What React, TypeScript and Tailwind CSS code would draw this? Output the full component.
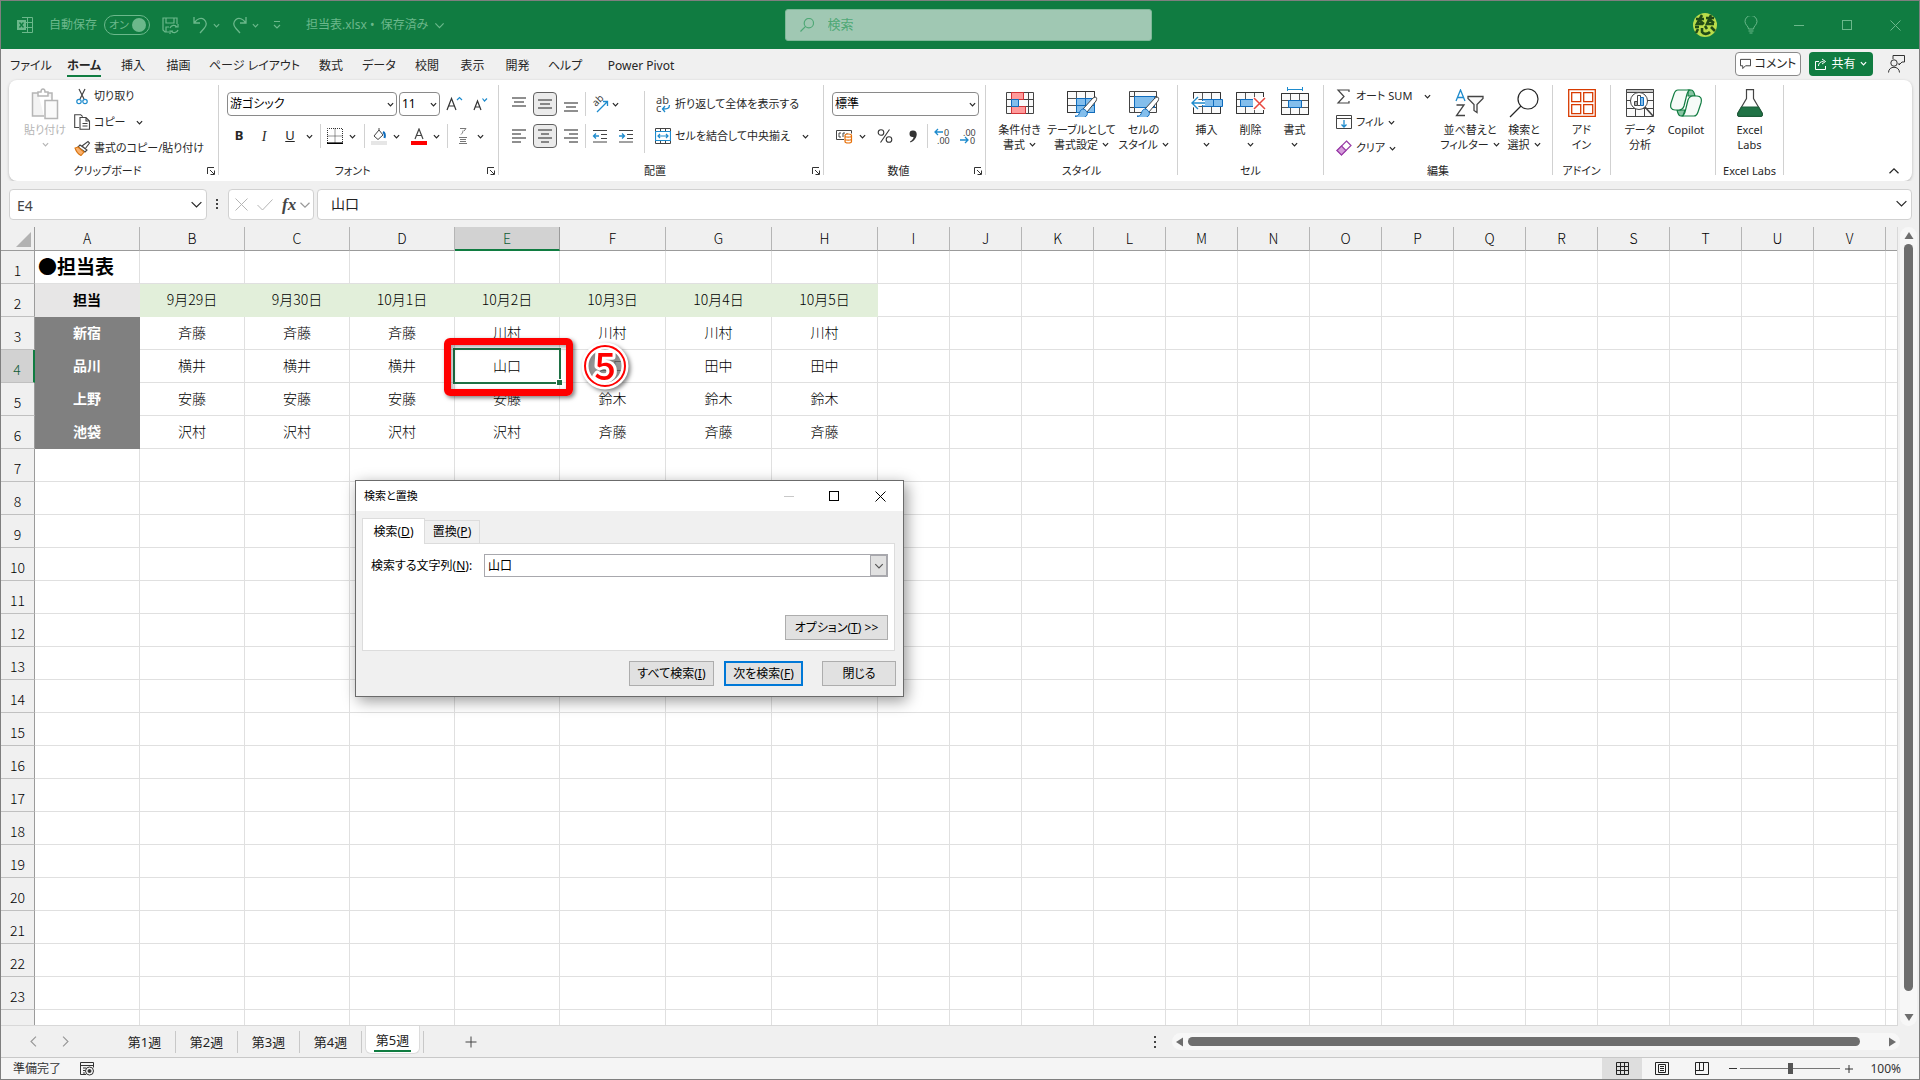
import React from 'react';
import clsx from 'clsx';

const RIBBON_TABS = [
  { label: 'ファイル', width: 'w-[54px]' },
  { label: 'ホーム', width: 'w-[52px]', active: true },
  { label: '挿入', width: 'w-[46px]' },
  { label: '描画', width: 'w-[45px]' },
  { label: 'ページ レイアウト', width: 'w-[107px]' },
  { label: '数式', width: 'w-[46px]' },
  { label: 'データ', width: 'w-[50px]' },
  { label: '校閲', width: 'w-[46px]' },
  { label: '表示', width: 'w-[45px]' },
  { label: '開発', width: 'w-[45px]' },
  { label: 'ヘルプ', width: 'w-[50px]' },
  { label: 'Power Pivot', width: 'w-[102px]' },
];

const COLUMNS = 'ABCDEFGHIJKLMNOPQRSTUVW'.split('');
const ROWS = Array.from({ length: 24 }, (_, i) => i + 1);

const DATA: Record<number, string[]> = {
  1: ['●担当表'],
  2: ['担当', '9月29日', '9月30日', '10月1日', '10月2日', '10月3日', '10月4日', '10月5日'],
  3: ['新宿', '斉藤', '斉藤', '斉藤', '川村', '川村', '川村', '川村'],
  4: ['品川', '横井', '横井', '横井', '山口', '山口', '田中', '田中'],
  5: ['上野', '安藤', '安藤', '安藤', '安藤', '鈴木', '鈴木', '鈴木'],
  6: ['池袋', '沢村', '沢村', '沢村', '沢村', '斉藤', '斉藤', '斉藤'],
};

const SHEETS = ['第1週', '第2週', '第3週', '第4週'];

function columnWidth(index: number) {
  if (index < 5) return 'w-[105px]';
  if (index < 8) return 'w-[106px]';
  return 'w-[72px]';
}

function cellStyle(row: number, col: number) {
  if (row === 1 && col === 0) {
    return 'border-[#e0e0e0] text-left pl-[3px] text-[19px] font-bold whitespace-nowrap';
  }
  if (row === 2 && col === 0) return 'border-[#e7e6e6] bg-[#e7e6e6] font-bold';
  if (row === 2 && col < 8) return 'border-[#e2efda] bg-[#e2efda]';
  if (row > 2 && row < 7 && col === 0) {
    return 'border-[#808080] bg-[#808080] text-white font-bold';
  }
  return 'border-[#e0e0e0]';
}

/* ---------- small pieces ---------- */

function Chevron({ size = 7, className }: { size?: number; className?: string }) {
  return (
    <svg width={size} height={size} viewBox="0 0 8 8" className={clsx('shrink-0', className)} fill="none" stroke="currentColor" strokeWidth="1.2">
      <path d="M1 2.5 4 5.5 7 2.5" vectorEffect="non-scaling-stroke" />
    </svg>
  );
}

function Divider() {
  return <div className="mt-[5px] h-[90px] w-px shrink-0 bg-[#d1d1d1]" />;
}

function Sep({ className }: { className: string }) {
  return (
    <div className={clsx('flex h-6 shrink-0 justify-center', className)}>
      <div className="h-full w-px bg-[#d1d1d1]" />
    </div>
  );
}

function Launcher() {
  return (
    <button type="button" className="flex w-3 items-center" aria-label="詳細設定">
      <svg width="10" height="10" viewBox="0 0 10 10" fill="none" stroke="#333" strokeWidth="1">
        <path d="M1.5 8V1.5H8M4 4l4 4M8.5 4.5v4h-4" />
      </svg>
    </button>
  );
}

interface GroupProps {
  width: string;
  caption?: string;
  launcher?: boolean;
  children: React.ReactNode;
}

function Group({ width, caption, launcher, children }: GroupProps) {
  return (
    <>
      <section className={clsx('flex shrink-0 flex-col', width)}>
        <div className="flex h-[81px]">{children}</div>
        <div className="flex h-5 items-stretch">
          <span className="flex-1 text-center leading-[19px] whitespace-nowrap">{caption}</span>
          {launcher && <Launcher />}
        </div>
      </section>
      <Divider />
    </>
  );
}

interface BigButtonProps {
  width: string;
  icon: React.ReactNode;
  lines: string[];
  arrow?: 'inline' | 'below';
}

function BigButton({ width, icon, lines, arrow }: BigButtonProps) {
  return (
    <button type="button" className={clsx('flex shrink-0 flex-col items-center pt-[9px] leading-[15px] whitespace-nowrap', width)}>
      <span className="mb-[5px] flex h-7 items-center">{icon}</span>
      {lines.map((line, i) => (
        <span key={line} className="flex items-center gap-1">
          {line}
          {arrow === 'inline' && i === lines.length - 1 && <Chevron />}
        </span>
      ))}
      {arrow === 'below' && (
        <span className="flex h-[15px] items-center">
          <Chevron />
        </span>
      )}
    </button>
  );
}

interface SmallButtonProps {
  icon: React.ReactNode;
  label: string;
  iconWidth?: string;
  arrow?: string;
}

function SmallButton({ icon, label, iconWidth = 'w-[18px]', arrow }: SmallButtonProps) {
  return (
    <button type="button" className="flex h-[26px] items-center whitespace-nowrap">
      <span className={clsx('flex items-center', iconWidth)}>{icon}</span>
      {label}
      {arrow && <Chevron className={arrow} />}
    </button>
  );
}

function IconButton({ children, label, width = 'w-6', pressed }: { children: React.ReactNode; label: string; width?: string; pressed?: boolean }) {
  return (
    <button
      type="button"
      aria-label={label}
      className={clsx(
        'flex h-6 shrink-0 items-center justify-center',
        width,
        pressed && 'rounded border border-[#616161] bg-[#ebebeb]'
      )}
    >
      {children}
    </button>
  );
}

function Combo({ value, width, label }: { value: string; width: string; label: string }) {
  return (
    <div className={clsx('relative h-6 shrink-0', width)}>
      <select aria-label={label} className="h-full w-full appearance-none rounded border border-[#8a8a8a] bg-white pl-[2px] text-[12px] leading-5 text-black">
        <option>{value}</option>
      </select>
      <Chevron className="pointer-events-none absolute top-[9px] right-[3px]" />
    </div>
  );
}

/* ---------- icons ---------- */

function Lines({ rows }: { rows: [number, number, number][] }) {
  return (
    <svg width="16" height="18" viewBox="0 0 16 18" stroke="#333" strokeWidth="1.1">
      {rows.map(([y, x1, x2]) => (
        <path key={y} d={`M${x1} ${y}H${x2}`} />
      ))}
    </svg>
  );
}

function TableGrid() {
  return (
    <g fill="#fafafa" stroke="#555" strokeWidth="1">
      <path d="M.5.5h27v21H.5zM.5 7.5h27M.5 14.5h27M9.5.5v21M18.5.5v21" />
      <path d="M.5.5h27v21H.5z" fill="none" stroke="#333" />
    </g>
  );
}

function Brush() {
  return (
    <g>
      <path d="M28 6c2 0 2 2 1 4l-9 11-4-3L26 7z" fill="#fff" stroke="#444" strokeWidth="1" />
      <path d="M17 18c-4 0-4 3-5 5s-2 2-4 2c3 3 10 3 12-1 1-2 0-4-3-6z" fill="#83beec" stroke="#0f6cbd" strokeWidth="1" />
    </g>
  );
}

function PasteIcon() {
  return (
    <svg width="28" height="32" viewBox="0 0 28 32" fill="#f3f3f3" stroke="#b5b5b5" strokeWidth="1.5">
      <path d="M7 5H1.500V28H13M16 5h5v7" />
      <path d="M7 8V4h3c0-4 4-4 4 0h3v4z" fill="#fff" />
      <path d="M14 12.500h12.500V30.500H14z" fill="#fafafa" />
    </svg>
  );
}

function ScissorsIcon() {
  return (
    <svg width="12" height="17" viewBox="0 0 12 17" fill="none" strokeWidth="1.2">
      <path d="M3 1l5 10M9 1 4 11" stroke="#444" />
      <circle cx="3" cy="13.500" r="2.200" stroke="#1e8bcd" />
      <circle cx="9" cy="13.500" r="2.200" stroke="#1e8bcd" />
    </svg>
  );
}

function CopyIcon() {
  return (
    <svg width="17" height="16" viewBox="0 0 17 16" fill="#fff" stroke="#444" strokeWidth="1.1" className="-ml-[2px]">
      <path d="M5 13.500H.7V.7h6l2 2" />
      <path d="M6 3.500h6l3.500 3.500v8.300H6zM12 3.500V7h3.500M8.500 9.500h5M8.500 12h5" />
    </svg>
  );
}

function PainterIcon() {
  return (
    <svg width="17" height="16" viewBox="0 0 17 16" strokeWidth="1.1" className="-ml-[2px]">
      <path d="M8 6 14 1.500l1.500 1.500L11 9z" fill="#fff" stroke="#444" />
      <path d="M6 5l7 5-2 2-7-5z" fill="#fff" stroke="#444" />
      <path d="M4 7l6 5-3 3.500C4 14 2 11 1 8z" fill="#f9b16e" stroke="#d9730d" />
    </svg>
  );
}

function CondFormatIcon() {
  return (
    <svg width="28" height="22" viewBox="0 0 28 22">
      <path d="M.5.5h27v21H.5zM.5 7.500h27M.5 14.500h27M5.500.5v21M22.500.5v21" fill="#fafafa" stroke="#444" />
      <path d="M5.500.5h12v7h-12zM5.500 14.500h14v7h-14z" fill="#ff9a9a" stroke="#d13438" />
      <path d="M5.500 7.500h7v7h-7z" fill="#83beec" stroke="#0f6cbd" />
    </svg>
  );
}

function TableFormatIcon() {
  return (
    <svg width="32" height="28" viewBox="0 -2 32 28" className="translate-x-px">
      <TableGrid />
      <path d="M9.500 7.500h18v14h-18z" fill="#83beec" stroke="#0f6cbd" />
      <path d="M9.500 14.500h18M18.500 7.500v14" stroke="#0f6cbd" />
      <Brush />
    </svg>
  );
}

function CellStyleIcon() {
  return (
    <svg width="32" height="28" viewBox="0 -2 32 28" className="translate-x-px">
      <path d="M.5.5h27v21H.5zM.5 5.500h27M.5 16.500h27M5.500.5v21" fill="#fafafa" stroke="#444" />
      <path d="M5.500 5.500h20v11h-20z" fill="#83beec" stroke="#0f6cbd" />
      <Brush />
    </svg>
  );
}

function InsertCellsIcon() {
  return (
    <svg width="32" height="22" viewBox="-2 0 32 22">
      <TableGrid />
      <path d="M9.500 7.500h20v7h-20zM20.500 7.500v7" fill="#83beec" stroke="#0f6cbd" />
      <path d="M-1 11H12M5 5l-6 6 6 6" fill="none" stroke="#fff" strokeWidth="4" />
      <path d="M-1 11H12M5 5l-6 6 6 6" fill="none" stroke="#1e8bcd" strokeWidth="1.400" />
    </svg>
  );
}

function DeleteCellsIcon() {
  return (
    <svg width="30" height="22" viewBox="0 0 30 22">
      <TableGrid />
      <path d="M4.500 7.500h14v7h-14z" fill="#83beec" stroke="#0f6cbd" />
      <path d="M17 5h13v13H17z" fill="#fff" />
      <path d="M18 6l11 11M29 6 18 17" stroke="#e8483f" strokeWidth="1.500" />
    </svg>
  );
}

function FormatCellsIcon() {
  return (
    <svg width="28" height="28" viewBox="0 -6 28 28" className="-translate-y-[2px]">
      <TableGrid />
      <path d="M7.500 7.500h13v7h-13z" fill="#83beec" stroke="#0f6cbd" />
      <path d="M6.500-3.500h15M6.500-6v4M21.500-6v4" stroke="#1e8bcd" />
    </svg>
  );
}

function FindIcon({ size = 30 }: { size?: number }) {
  return (
    <svg width={size} height={size} viewBox="0 0 30 30" fill="none" stroke="currentColor" strokeWidth="1.200">
      <circle cx="19" cy="11" r="10" vectorEffect="non-scaling-stroke" />
      <path d="M12 18 1 29" vectorEffect="non-scaling-stroke" />
    </svg>
  );
}

function SortFilterIcon() {
  return (
    <svg width="30" height="28" viewBox="0 0 30 28" fill="none" strokeWidth="1.300">
      <path d="M1 12 5.500 1 10 12M2.500 8.500h6" stroke="#1e8bcd" />
      <path d="M1.500 16H9L1.500 26.500H10" stroke="#444" />
      <path d="M13 7.500h15v2l-6 6v8l-3-2v-6l-6-6z" stroke="#444" fill="#fafafa" />
    </svg>
  );
}

function AddinIcon() {
  return (
    <svg width="28" height="28" viewBox="0 0 28 28" fill="none" stroke="#d83b01" strokeWidth="1.300">
      <path d="M.7.7h26.600v26.600H.7zM3.700 3.700h9v9h-9zM15.700 3.700h9v9h-9zM3.700 15.700h9v9h-9zM15.700 15.700h9v9h-9z" />
    </svg>
  );
}

function DataAnalysisIcon() {
  return (
    <svg width="28" height="28" viewBox="0 0 28 28" fill="none" stroke="#444">
      <path d="M.5.5h27v27H.5zM.5 11.500h27M.5 19.500h27M9.500 19.500v8M18.500 19.500v8" fill="#fafafa" />
      <path d="M.5.5h27v3H.5z" fill="#c8c8c8" />
      <circle cx="13" cy="12" r="8.500" fill="#fff" />
      <path d="M19 18l8 9" strokeWidth="1.600" />
      <path d="M8.500 12.500h3v4h-3z" fill="#aaa" />
      <path d="M11.500 6.500h3v10h-3z" fill="#fff" />
      <path d="M14.500 8.500h3v8h-3z" fill="#83beec" stroke="#0f6cbd" />
    </svg>
  );
}

function CopilotIcon() {
  return (
    <svg width="32" height="28" viewBox="0 0 32 28" stroke="#107c41" strokeWidth="1.200" strokeLinejoin="round">
      <path d="M18 1h3c3 0 3 3 4 6h-7z" fill="#88c5a3" />
      <path d="M7 21h8l-2 6h-2c-3 0-3-3-4-6z" fill="#88c5a3" />
      <path d="M8 1h12c-3 1-3 4-4 8l-2 8c-1 3-2 4-5 4H5c-4 0-5-3-4-7l3-9c1-3 2-4 4-4z" fill="#f6fbf8" />
      <path d="M24 27H12c3-1 3-4 4-8l2-8c1-3 2-4 5-4h4c4 0 5 3 4 7l-3 9c-1 3-2 4-4 4z" fill="#f6fbf8" />
    </svg>
  );
}

function FlaskIcon() {
  return (
    <svg width="26" height="28" viewBox="0 0 26 28" fill="#fff" stroke="#444" strokeWidth="1.200">
      <path d="M9.500.6h7v9L25 24c1 2 0 3.400-2 3.400H3C1 27.400 0 26 1 24L9.500 9.600z" />
      <path d="M4.500 18h17l3.500 6c1 2 0 3.400-2 3.400H3C1 27.400 0 26 1 24z" fill="#217346" stroke="#1d5e3a" />
    </svg>
  );
}

/* ---------- window parts ---------- */

function TitleBar() {
  return (
    <header className="flex h-12 shrink-0 items-center bg-[#107c41] text-[12px] text-[#6bb88b]">
      <div className="flex flex-1 basis-0 items-center pl-4 whitespace-nowrap">
        <svg width="16" height="16" viewBox="0 0 16 16" fill="none" stroke="currentColor">
          <path d="M5 .5h10.500v15H5M5 5.500h10.500M5 10.500h10.500M10.500.5v15" />
          <path d="M0 3h9v10H0z" fill="currentColor" stroke="none" />
          <path d="M2.500 5.500l4 5M6.500 5.500l-4 5" stroke="#107c41" strokeWidth="1.300" />
        </svg>
        <span className="ml-4">自動保存</span>
        <button type="button" role="switch" aria-checked="true" className="ml-[7px] flex h-5 w-[46px] items-center justify-between rounded-full border border-current pr-[3px] pl-1 text-[11px]">
          オン
          <span className="h-[14px] w-[14px] rounded-full bg-[#6bb88b]" />
        </button>
        <button type="button" aria-label="保存" className="ml-3">
          <svg width="17" height="17" viewBox="0 0 17 17" fill="none" stroke="currentColor" strokeWidth="1.200">
            <path d="M7 15H3L1 13V1h14v6M4 1v5h8V1M4 15v-5h3" />
            <path d="M8 11a4 4 0 0 1 7-1M16 7v3h-3M16 13a4 4 0 0 1-7 1M8 17v-3h3" />
          </svg>
        </button>
        <button type="button" aria-label="元に戻す" className="ml-[14px] flex items-center gap-[5px]">
          <svg width="15" height="18" viewBox="0 0 15 18" fill="none" stroke="currentColor" strokeWidth="1.300">
            <path d="M1 1v6h6M1.500 6.500C4 3 8 1 11 3.500s3 6 0 9L7 17" />
          </svg>
          <Chevron />
        </button>
        <button type="button" aria-label="やり直し" className="ml-3 flex items-center gap-[5px]">
          <svg width="15" height="18" viewBox="0 0 15 18" fill="none" stroke="currentColor" strokeWidth="1.300">
            <path d="M14 1v6H8M13.500 6.500C11 3 7 1 4 3.500s-3 6 0 9L8 17" />
          </svg>
          <Chevron />
        </button>
        <button type="button" aria-label="クイック アクセスのカスタマイズ" className="ml-[14px]">
          <svg width="8" height="10" viewBox="0 0 8 10" fill="none" stroke="currentColor" strokeWidth="1.200">
            <path d="M1 1.500h6M1 5l3 3 3-3" />
          </svg>
        </button>
        <button type="button" className="ml-[25px] flex items-center gap-[6px]">
          <span>担当表.xlsx&nbsp;•&nbsp; 保存済み</span>
          <Chevron size={11} />
        </button>
      </div>

      <label className="flex h-8 w-[367px] items-center rounded-[3px] border border-[#7fb898] bg-[#a0c8b3] pl-[14px] text-[#4fa876]">
        <FindIcon size={14} />
        <input type="search" aria-label="検索" placeholder="検索" className="ml-[14px] w-[300px] bg-transparent text-[13px] placeholder:text-[#4fa876]" />
      </label>

      <div className="flex flex-1 basis-0 items-center justify-end">
        <svg width="24" height="24" viewBox="0 0 24 24" className="mr-[10px]" fill="none" stroke="#1f4a17" strokeWidth="2.600">
          <circle cx="12" cy="12" r="12" fill="#b9dc4a" stroke="none" />
          <path d="M3 6h8M9 2 4 11h6M6 7l5 4M13 5h8M18 2l-4 9h7M16 6l5 4M2 14h4M5 16l-2 4M9 15v4c2 3 6 2 8 0M12 13l2 3M18 14l4 4" />
        </svg>
        <button type="button" aria-label="ヒント" className="flex w-12 justify-center">
          <svg width="14" height="18" viewBox="0 0 14 18" fill="none" stroke="currentColor">
            <path d="M4.500 13c0-3-3.500-4-3.500-7.500a6 6 0 0 1 12 0C13 9 9.500 10 9.500 13zM4.500 15h5M5.500 17h3" />
          </svg>
        </button>
        <button type="button" aria-label="最小化" className="flex w-12 justify-center">
          <span className="h-px w-[10px] bg-[#6bb88b]" />
        </button>
        <button type="button" aria-label="最大化" className="flex w-12 justify-center">
          <span className="h-[10px] w-[10px] border border-[#6bb88b]" />
        </button>
        <button type="button" aria-label="閉じる" className="flex w-12 justify-center">
          <svg width="11" height="11" viewBox="0 0 11 11" stroke="currentColor">
            <path d="M.5.5l10 10M10.500.5l-10 10" />
          </svg>
        </button>
      </div>
    </header>
  );
}

function RibbonTabs() {
  return (
    <nav className="flex h-[31px] shrink-0 items-center bg-[#f0f0f0] pr-[14px] pl-[3px] text-[12px]">
      {RIBBON_TABS.map((tab) => (
        <button key={tab.label} type="button" className={clsx('flex h-full justify-center pt-[7px] whitespace-nowrap', tab.width)}>
          <span className={clsx('h-[21px] leading-5', tab.active && 'border-b-2 border-[#107c41] font-bold')}>{tab.label}</span>
        </button>
      ))}
      <button type="button" className="mb-[2px] ml-auto flex h-6 w-[66px] items-center justify-center gap-1 rounded border border-[#8a8a8a] bg-white text-[12px]">
        <svg width="11" height="11" viewBox="0 0 12 12" fill="none" stroke="#333">
          <path d="M.5 1.500h11v7H6l-3 3v-3H.5z" />
        </svg>
        コメント
      </button>
      <button type="button" className="mb-[2px] ml-2 flex h-6 w-16 items-center justify-center gap-1 rounded bg-[#107c41] text-[12px] text-white">
        <svg width="12" height="12" viewBox="0 0 12 12" fill="none" stroke="currentColor">
          <path d="M4 3.500H.5v8h10V8M3.500 8c0-3 2-4.500 5-4.500M7 1l3.500 2.500L7 6" />
        </svg>
        共有
        <Chevron />
      </button>
      <button type="button" aria-label="プレゼンス" className="mb-[2px] ml-[15px]">
        <svg width="17" height="18" viewBox="0 0 17 18" fill="none" stroke="#333">
          <path d="M5 4V.5h11.500V7H14l-3 3V8" />
          <circle cx="6" cy="8" r="3.200" />
          <path d="M.5 17.500c0-7 11-7 11 0" />
        </svg>
      </button>
    </nav>
  );
}

function ClipboardGroup() {
  return (
    <Group width="w-[209px]" caption="クリップボード" launcher>
      <button type="button" className="flex w-[66px] flex-col items-center pt-2 pl-[6px] leading-[15px] text-[#b5b5b5]">
        <PasteIcon />
        <span className="mt-[2px]">貼り付け</span>
        <Chevron className="mt-1" />
      </button>
      <div className="flex flex-col items-start pt-[3px] pl-[1px]">
        <SmallButton icon={<ScissorsIcon />} label="切り取り" />
        <SmallButton icon={<CopyIcon />} label="コピー" arrow="ml-[10px]" />
        <SmallButton icon={<PainterIcon />} label="書式のコピー/貼り付け" />
      </div>
    </Group>
  );
}

function FontGroup() {
  return (
    <Group width="w-[279px]" caption="フォント" launcher>
      <div className="flex flex-col gap-2 pt-3 pl-2">
        <div className="flex items-center">
          <Combo value="游ゴシック" width="w-[170px]" label="フォント" />
          <div className="w-[2px]" />
          <Combo value="11" width="w-[41px]" label="フォント サイズ" />
          <IconButton label="フォント サイズの拡大" width="w-7">
            <svg width="17" height="16" viewBox="0 0 17 16" fill="none" stroke="#333" strokeWidth="1.200">
              <path d="M1 14 5.500 2.500 10 14M2.500 10h6" />
              <path d="M11 4l2.500-2.500L16 4" stroke="#1e8bcd" />
            </svg>
          </IconButton>
          <IconButton label="フォント サイズの縮小">
            <svg width="15" height="14" viewBox="0 0 15 14" fill="none" stroke="#333" strokeWidth="1.200">
              <path d="M1 13 4.500 4 8 13M2.500 10h4" />
              <path d="M9.500 1.500 11.500 4l2.500-2.500" stroke="#1e8bcd" />
            </svg>
          </IconButton>
        </div>
        <div className="flex items-center text-[13px]">
          <IconButton label="太字"><b>B</b></IconButton>
          <IconButton label="斜体" width="w-[26px]"><i className="font-['Liberation_Serif'] text-[14px]">I</i></IconButton>
          <IconButton label="下線" width="w-[26px]"><u>U</u></IconButton>
          <Chevron className="mx-[3px]" />
          <Sep className="w-[9px]" />
          <IconButton label="罫線" width="w-5">
            <svg width="16" height="16" viewBox="0 0 16 16" fill="none" stroke="#333">
              <path d="M.5 15V.5h15V15M8 .5V15M.5 8h15" strokeDasharray="1 1" />
              <path d="M0 15.200h16" strokeWidth="1.600" stroke="#000" />
            </svg>
          </IconButton>
          <Chevron className="mx-1" />
          <Sep className="w-[9px]" />
          <IconButton label="塗りつぶしの色" width="w-5">
            <svg width="16" height="17" viewBox="0 0 16 17" fill="none" stroke="#444">
              <path d="M3 8 8 2l4 5-5 4.500zM8 2V0" />
              <path d="M12 4c2 1 2 4 1.500 6" stroke="#0f6cbd" strokeWidth="2" />
              <path d="M0 13h16v4H0z" fill="#e6e6e6" stroke="none" />
            </svg>
          </IconButton>
          <Chevron className="mr-[7px] ml-1" />
          <IconButton label="フォントの色">
            <svg width="16" height="17" viewBox="0 0 16 17" fill="none" stroke="#444" strokeWidth="1.200">
              <path d="M4 11 8 1l4 10M5.500 7.500h5" />
              <path d="M0 13h16v4H0z" fill="#f00" stroke="none" />
            </svg>
          </IconButton>
          <Chevron className="mx-[2px]" />
          <Sep className="w-[11px]" />
          <IconButton label="ふりがな" width="w-5">
            <svg width="12" height="18" viewBox="0 0 12 18" fill="none" stroke="#777">
              <path d="M3 1.500h6L7 4M6 3.500c0 2-1 3-2 4M2 10.500h8M3 12.500h6M3 14.500h6M2 16.500h8" />
            </svg>
          </IconButton>
          <Chevron className="mx-1" />
        </div>
      </div>
    </Group>
  );
}

function AlignmentGroup() {
  return (
    <Group width="w-[324px]" caption="配置" launcher>
      <div className="flex w-[141px] flex-col gap-2 pt-3 pl-2">
        <div className="flex items-center">
          <IconButton label="上揃え"><Lines rows={[[3, 1, 15], [7, 3, 13], [11, 1, 15]]} /></IconButton>
          <div className="w-[2px]" />
          <IconButton label="上下中央揃え" pressed><Lines rows={[[5, 1, 15], [9, 3, 13], [13, 1, 15]]} /></IconButton>
          <div className="w-[2px]" />
          <IconButton label="下揃え"><Lines rows={[[8, 1, 15], [12, 3, 13], [16, 1, 15]]} /></IconButton>
          <Sep className="w-[5px]" />
          <IconButton label="方向">
            <svg width="17" height="17" viewBox="0 0 17 17" fill="none" className="overflow-visible">
              <text transform="translate(4 11) rotate(-45)" fontSize="10" fill="#444">ab</text>
              <path d="M5 16 15 6M11 5.500h4.500V10" stroke="#1e8bcd" strokeWidth="1.300" />
            </svg>
          </IconButton>
          <Chevron />
        </div>
        <div className="flex items-center">
          <IconButton label="左揃え"><Lines rows={[[3, 1, 15], [7, 1, 10], [11, 1, 15], [15, 1, 10]]} /></IconButton>
          <div className="w-[2px]" />
          <IconButton label="中央揃え" pressed><Lines rows={[[3, 1, 15], [7, 4, 12], [11, 1, 15], [15, 4, 12]]} /></IconButton>
          <div className="w-[2px]" />
          <IconButton label="右揃え"><Lines rows={[[3, 1, 15], [7, 6, 15], [11, 1, 15], [15, 6, 15]]} /></IconButton>
          <Sep className="w-[5px]" />
          <IconButton label="インデントを減らす">
            <svg width="16" height="14" viewBox="0 0 16 14" fill="none" stroke="#444">
              <path d="M1 1.500h14M9 5.500h6M9 9.500h6M1 13h14" />
              <path d="M7 7H1.500M4 4.500 1.500 7 4 9.500" stroke="#1e8bcd" strokeWidth="1.300" />
            </svg>
          </IconButton>
          <div className="w-[2px]" />
          <IconButton label="インデントを増やす">
            <svg width="16" height="14" viewBox="0 0 16 14" fill="none" stroke="#444">
              <path d="M1 1.500h14M9 5.500h6M9 9.500h6M1 13h14" />
              <path d="M1 7h5.500M4 4.500 6.500 7 4 9.500" stroke="#1e8bcd" strokeWidth="1.300" />
            </svg>
          </IconButton>
        </div>
      </div>
      <div className="mt-[11px] ml-1 h-[62px] w-px bg-[#d1d1d1]" />
      <div className="flex flex-col gap-2 pt-3 pl-[10px]">
        <button type="button" className="flex h-6 items-center whitespace-nowrap">
          <svg width="16" height="17" viewBox="0 0 16 17" className="mr-1 overflow-visible">
            <text x="1" y="8" fontSize="11" fill="#444">ab</text>
            <text x="1" y="16" fontSize="11" fill="#444">c</text>
            <path d="M14.500 9c0 4-3 4-7 4M10 10l-2.500 3L10 16" fill="none" stroke="#1e8bcd" strokeWidth="1.300" />
          </svg>
          折り返して全体を表示する
        </button>
        <button type="button" className="flex h-6 items-center whitespace-nowrap">
          <svg width="16" height="16" viewBox="0 0 16 16" fill="none" stroke="#444" className="mr-1">
            <path d="M.5.5h15v15H.5zM5.500.5v3M10.500.5v3M5.500 12.500v3M10.500 12.500v3" />
            <path d="M.5 3.500h15v9H.5zM3 8h10M5 6 3 8l2 2M11 6l2 2-2 2" stroke="#1e8bcd" strokeWidth="1.200" />
          </svg>
          セルを結合して中央揃え
          <Chevron className="ml-3" />
        </button>
      </div>
    </Group>
  );
}

function NumberGroup() {
  return (
    <Group width="w-[161px]" caption="数値" launcher>
      <div className="flex flex-col gap-2 pt-3 pl-2">
        <Combo value="標準" width="w-[147px]" label="表示形式" />
        <div className="flex items-center">
          <IconButton label="通貨">
            <svg width="17" height="15" viewBox="0 0 17 15" fill="none" stroke="#444">
              <path d="M8 10.500H.5v-9h15v3M5 4H3v4h2M7 8V4h2M11 4v1" />
              <path d="M9 6.500c0-2 6.500-2 6.500 0v6c0 2-6.500 2-6.500 0zM9 7c0 1.500 6.500 1.500 6.500 0M9 10c0 1.500 6.500 1.500 6.500 0" fill="#fff" stroke="#e8710a" strokeWidth="1.200" />
            </svg>
          </IconButton>
          <Chevron className="mx-[3px]" />
          <IconButton label="パーセント スタイル" width="w-8">
            <svg width="16" height="16" viewBox="0 0 16 16" fill="none" stroke="#333" strokeWidth="1.100">
              <circle cx="4" cy="4.500" r="2.800" />
              <circle cx="12" cy="11.500" r="2.800" />
              <path d="M12.500 1.500l-9 13" />
            </svg>
          </IconButton>
          <IconButton label="桁区切りスタイル">
            <svg width="8" height="13" viewBox="0 0 8 13" fill="#333">
              <path d="M4 .5c6 0 4.500 9-2.500 12l-.5-1c2.500-1.500 3.500-3 3.500-4.500C2 7.500.5 6 .5 4A3.400 3.400 0 0 1 4 .5z" />
            </svg>
          </IconButton>
          <Sep className="w-[5px]" />
          <IconButton label="小数点以下の表示桁数を増やす">
            <svg width="17" height="17" viewBox="0 0 17 17" fill="#444" fontSize="9" className="overflow-visible">
              <text x="10" y="8">0</text>
              <text x="3" y="16">.00</text>
              <path d="M9 4H1M4 1 1 4l3 3" fill="none" stroke="#1e8bcd" strokeWidth="1.300" />
            </svg>
          </IconButton>
          <IconButton label="小数点以下の表示桁数を減らす" width="w-7">
            <svg width="17" height="17" viewBox="0 0 17 17" fill="#444" fontSize="9" className="overflow-visible">
              <text x="3" y="8">.00</text>
              <text x="10" y="16">0</text>
              <path d="M0 12h8M5 9l3 3-3 3" fill="none" stroke="#1e8bcd" strokeWidth="1.300" />
            </svg>
          </IconButton>
        </div>
      </div>
    </Group>
  );
}

function EditingGroup() {
  return (
    <Group width="w-[228px]" caption="編集">
      <div className="flex w-[119px] flex-col items-start pt-[3px] pl-3">
        <SmallButton
          icon={
            <svg width="15" height="15" viewBox="0 0 15 15" fill="none" stroke="#444" strokeWidth="1.200">
              <path d="M13 3V1H2l6 6.500L2 14h11v-2" />
            </svg>
          }
          iconWidth="w-5"
          label="オート SUM"
          arrow="ml-3"
        />
        <SmallButton
          icon={
            <svg width="16" height="14" viewBox="0 0 16 14" fill="none" stroke="#444">
              <path d="M.5.500h15v13H.5zM.5 3.500h15" />
              <path d="M8 5v7M5.500 9.500 8 12l2.500-2.500" stroke="#1e8bcd" strokeWidth="1.300" />
            </svg>
          }
          iconWidth="w-5"
          label="フィル"
          arrow="ml-1"
        />
        <SmallButton
          icon={
            <svg width="16" height="16" viewBox="0 0 16 16" fill="#fff" stroke="#9a3da8" strokeWidth="1.200">
              <path d="M10.500 1 15 5.500 5.500 15 1 10.500z" />
              <path d="M5.500 6 10 10.500 5.500 15 1 10.500z" fill="#d59ddb" />
            </svg>
          }
          iconWidth="w-5"
          label="クリア"
          arrow="ml-1"
        />
      </div>
      <BigButton width="w-[54px]" icon={<SortFilterIcon />} lines={['並べ替えと', 'フィルター']} arrow="inline" />
      <BigButton width="w-[54px]" icon={<FindIcon />} lines={['検索と', '選択']} arrow="inline" />
    </Group>
  );
}

function Ribbon() {
  return (
    <div className="shrink-0 bg-[#f0f0f0] pr-[7px] pl-2">
      <div className="flex h-[101px] rounded-lg bg-white text-[11px] shadow-[0_1px_3px_rgba(0,0,0,0.25)]">
        <ClipboardGroup />
        <FontGroup />
        <AlignmentGroup />
        <NumberGroup />
        <Group width="w-[191px]" caption="スタイル">
          <div className="flex flex-1 justify-center">
            <BigButton width="w-[62px]" icon={<CondFormatIcon />} lines={['条件付き', '書式']} arrow="inline" />
            <BigButton width="w-[62px]" icon={<TableFormatIcon />} lines={['テーブルとして', '書式設定']} arrow="inline" />
            <BigButton width="w-[62px]" icon={<CellStyleIcon />} lines={['セルの', 'スタイル']} arrow="inline" />
          </div>
        </Group>
        <Group width="w-[145px]" caption="セル">
          <div className="flex flex-1 justify-center">
            <BigButton width="w-11" icon={<InsertCellsIcon />} lines={['挿入']} arrow="below" />
            <BigButton width="w-11" icon={<DeleteCellsIcon />} lines={['削除']} arrow="below" />
            <BigButton width="w-11" icon={<FormatCellsIcon />} lines={['書式']} arrow="below" />
          </div>
        </Group>
        <EditingGroup />
        <Group width="w-[57px]" caption="アドイン">
          <BigButton width="w-full" icon={<AddinIcon />} lines={['アド', 'イン']} />
        </Group>
        <Group width="w-[104px]">
          <div className="flex flex-1 justify-center">
            <BigButton width="w-[46px]" icon={<DataAnalysisIcon />} lines={['データ', '分析']} />
            <BigButton width="w-[46px]" icon={<CopilotIcon />} lines={['Copilot']} />
          </div>
        </Group>
        <Group width="w-[67px]" caption="Excel Labs">
          <BigButton width="w-full" icon={<FlaskIcon />} lines={['Excel', 'Labs']} />
        </Group>
        <button type="button" aria-label="リボンを折りたたむ" className="mt-auto mr-3 mb-1 ml-auto">
          <Chevron size={12} className="rotate-180" />
        </button>
      </div>
    </div>
  );
}

function FormulaBar() {
  return (
    <div className="flex h-[46px] shrink-0 items-start bg-[#f0f0f0] px-2 pt-2 pr-[7px] text-[14px]">
      <div className="flex h-[31px] w-[198px] items-center rounded border border-[#d1d1d1] bg-white pr-[3px] pl-[7px]">
        <input aria-label="名前ボックス" defaultValue="E4" className="w-full min-w-0 pt-[2px] text-[14px] text-[#444]" />
        <Chevron size={13} />
      </div>
      <svg width="3" height="12" viewBox="0 0 3 12" fill="#444" className="mx-[9px] mt-[10px]">
        <path d="M0 0h2v2H0zM0 4h2v2H0zM0 8h2v2H0z" />
      </svg>
      <div className="flex h-[31px] w-[86px] items-center rounded border border-[#d1d1d1] bg-white pl-[6px] text-[#b5b5b5]">
        <svg width="13" height="13" viewBox="0 0 13 13" stroke="currentColor">
          <path d="M.5.500l12 12M12.500.500l-12 12" />
        </svg>
        <svg width="16" height="12" viewBox="0 0 16 12" fill="none" stroke="currentColor" className="ml-[9px]">
          <path d="M.5 6l5 5L15.500.500" />
        </svg>
        <span className="ml-[9px] font-['Liberation_Serif'] text-[17px] leading-5 font-bold text-[#444] italic">fx</span>
        <Chevron size={12} className="ml-[3px] text-[#999]" />
      </div>
      <div className="ml-[3px] flex h-[31px] flex-1 items-center rounded border border-[#d1d1d1] bg-white pr-[3px] pb-[2px] pl-[13px]">
        <input aria-label="数式バー" defaultValue="山口" className="min-w-0 flex-1 text-[14px] text-[#222]" />
        <Chevron size={13} />
      </div>
    </div>
  );
}

function StepBadge() {
  return (
    <svg width="54" height="54" viewBox="0 0 54 54" className="absolute -top-[11px] left-[123px] z-10 drop-shadow-[2px_2px_2px_rgba(0,0,0,0.5)]">
      <circle cx="27" cy="27" r="18" fill="#888" fillOpacity=".6" />
      <circle cx="27" cy="27" r="20" fill="none" stroke="#fff" strokeWidth="7" />
      <circle cx="27" cy="27" r="20" fill="none" stroke="#f00" strokeWidth="2" />
      <text x="27" y="41" textAnchor="middle" fontSize="38" fontWeight="500" fill="#f00" stroke="#fff" strokeWidth="6" strokeLinejoin="round" paintOrder="stroke">
        5
      </text>
    </svg>
  );
}

function Sheet() {
  return (
    <div className="flex min-h-0 flex-1 bg-[#f0f0f0]">
      <div className="min-w-0 flex-1 overflow-hidden border-r border-b border-[#d8d8d8] bg-white">
        <table className="w-0 table-fixed border-separate border-spacing-0 font-['Noto_Sans_CJK_JP','Noto_Sans',sans-serif] text-[14px] font-light text-black">
          <colgroup>
            <col className="w-[34px]" />
            {COLUMNS.map((name, i) => (
              <col key={name} className={columnWidth(i)} />
            ))}
          </colgroup>
          <thead>
            <tr className="h-6 bg-[#f0f0f0]">
              <th className="h-6 border-r border-b border-[#9b9b9b] p-0">
                <svg width="17" height="17" viewBox="0 0 17 17" className="mt-[2px] ml-[14px]" fill="#b2b2b2">
                  <path d="M16 1v15H1z" />
                </svg>
              </th>
              {COLUMNS.map((name) => (
                <th
                  key={name}
                  scope="col"
                  className={clsx(
                    'h-6 p-0 text-[14px] leading-[21px] font-light',
                    name === 'E'
                      ? 'border-r border-b-2 border-r-[#9b9b9b] border-b-[#107c41] bg-[#d2d2d2] text-[#0f5c35]'
                      : 'border-r border-b border-r-[#b5b5b5] border-b-[#9b9b9b]'
                  )}
                >
                  {name}
                </th>
              ))}
            </tr>
          </thead>
          <tbody>
            {ROWS.map((row) => (
              <tr key={row} className="h-[33px]">
                <th
                  scope="row"
                  className={clsx(
                    'h-[33px] border-b border-b-[#c0c0c0] p-0 pt-[5px] text-[14px] leading-5 font-light',
                    row === 4 ? 'border-r-2 border-r-[#107c41] bg-[#d2d2d2] text-[#0f5c35]' : 'border-r border-r-[#9b9b9b] bg-[#f0f0f0]'
                  )}
                >
                  {row}
                </th>
                {COLUMNS.map((name, col) => (
                  <td key={name} className={clsx('relative h-[33px] border-r border-b p-0 pb-[2px] text-center leading-6', cellStyle(row, col))}>
                    {DATA[row]?.[col]}
                    {row === 4 && name === 'E' && (
                      <>
                        <span className="absolute -top-[2px] -right-[2px] -bottom-[2px] -left-[2px] z-10 border-2 border-[#1e7145]" />
                        <span className="absolute -right-[3px] -bottom-[3px] z-10 h-[6px] w-[6px] border-t border-l border-white bg-[#1e7145]" />
                        <span className="absolute -top-3 -right-[14px] -bottom-[14px] -left-[11px] z-10 rounded-md border-[7px] border-[#f00] shadow-[2px_2px_4px_rgba(0,0,0,0.5),inset_2px_2px_4px_rgba(0,0,0,0.35)]" />
                        <StepBadge />
                      </>
                    )}
                  </td>
                ))}
              </tr>
            ))}
          </tbody>
        </table>
      </div>
      <div className="mr-[2px] ml-[2px] flex w-[17px] flex-col items-center rounded-full bg-[#f7f7f7] py-1 text-[#6e6e6e]">
        <svg width="10" height="9" viewBox="0 0 10 9" fill="currentColor">
          <path d="M5 1l4.500 7h-9z" />
        </svg>
        <div className="mt-1 mb-[22px] w-[9px] flex-1 rounded-full bg-[#6e6e6e]" />
        <svg width="10" height="9" viewBox="0 0 10 9" fill="currentColor">
          <path d="M5 8 .5 1h9z" />
        </svg>
      </div>
    </div>
  );
}

function SheetTabs() {
  return (
    <div className="flex h-[31px] shrink-0 items-center bg-[#f0f0f0] text-[13px] text-[#222]">
      <button type="button" aria-label="前のシート" className="ml-[26px] text-[#999]">
        <Chevron size={13} className="rotate-90" />
      </button>
      <button type="button" aria-label="次のシート" className="ml-[19px] text-[#999]">
        <Chevron size={13} className="-rotate-90" />
      </button>
      <div className="ml-[42px] flex items-center self-stretch">
        {SHEETS.map((name) => (
          <button key={name} type="button" className="h-[22px] w-[62px] border-r border-[#c8c8c8] leading-[22px]">
            {name}
          </button>
        ))}
        <button type="button" className="mx-[3px] h-7 w-[55px] self-start rounded-b-md border border-t-0 border-[#dcdcdc] bg-white px-2">
          <span className="block h-6 border-b-2 border-[#107c41] text-center leading-6">第5週</span>
        </button>
        <div className="h-[22px] w-px bg-[#c8c8c8]" />
      </div>
      <button type="button" aria-label="新しいシート" className="ml-[41px]">
        <svg width="12" height="12" viewBox="0 0 12 12" stroke="#444">
          <path d="M6 .5v11M.5 6h11" />
        </svg>
      </button>
      <svg width="3" height="12" viewBox="0 0 3 12" fill="#444" className="ml-auto">
        <path d="M0 0h2v2H0zM0 5h2v2H0zM0 10h2v2H0z" />
      </svg>
      <div className="mr-[19px] ml-[15px] flex h-[17px] w-[728px] items-center rounded-full bg-[#f7f7f7] px-1 text-[#6e6e6e]">
        <svg width="8" height="10" viewBox="0 0 8 10" fill="currentColor">
          <path d="M0 5 7 .500v9z" />
        </svg>
        <div className="mr-7 ml-1 h-[9px] flex-1 rounded-full bg-[#6e6e6e]" />
        <svg width="8" height="10" viewBox="0 0 8 10" fill="currentColor">
          <path d="M8 5 1 .500v9z" />
        </svg>
      </div>
    </div>
  );
}

function StatusBar() {
  return (
    <footer className="flex h-[22px] shrink-0 items-center border-t border-[#c8c8c8] bg-[#f5f5f5] text-[12px] text-[#333]">
      <span className="ml-3">準備完了</span>
      <svg width="15" height="14" viewBox="0 0 15 14" fill="none" stroke="#333" className="ml-[19px]">
        <path d="M6 12.500H.5V.5h13v5M.5 3.500h13M3 6h3M3 8.500h2M3 11h2" />
        <circle cx="9.500" cy="9" r="4" fill="#f5f5f5" />
        <circle cx="9.500" cy="9" r="1.500" fill="#333" />
      </svg>
      <button type="button" aria-label="標準" className="ml-auto flex h-full w-10 items-center justify-center bg-[#dedede]">
        <svg width="13" height="13" viewBox="0 0 13 13" fill="none" stroke="#222">
          <path d="M.5.500h12v12H.5zM.5 4.500h12M.5 8.500h12M4.500.500v12M8.500.500v12" />
        </svg>
      </button>
      <button type="button" aria-label="ページ レイアウト" className="flex h-full w-10 items-center justify-center">
        <svg width="14" height="13" viewBox="0 0 14 13" fill="none" stroke="#222">
          <path d="M.5.500h13v12H.5zM3.500 2.500h7v8h-7zM5 4.500h4M5 6.500h4M5 8.500h4" />
        </svg>
      </button>
      <button type="button" aria-label="改ページ プレビュー" className="flex h-full w-10 items-center justify-center">
        <svg width="14" height="13" viewBox="0 0 14 13" fill="none" stroke="#222">
          <path d="M.5.500h13v12H.5zM.5 8.500h8V.500M4.500.500v8" />
        </svg>
      </button>
      <button type="button" aria-label="縮小" className="ml-1 flex h-full w-[14px] items-center justify-center">
        <span className="h-px w-2 bg-[#333]" />
      </button>
      <input
        type="range"
        aria-label="ズーム"
        className="h-3 w-[100px] appearance-none bg-[linear-gradient(#777,#777)] bg-[length:100%_1px] bg-center bg-no-repeat [&::-webkit-slider-thumb]:h-[11px] [&::-webkit-slider-thumb]:w-[5px] [&::-webkit-slider-thumb]:appearance-none [&::-webkit-slider-thumb]:bg-[#555]"
      />
      <button type="button" aria-label="拡大" className="flex h-full w-[18px] items-center justify-center">
        <svg width="8" height="8" viewBox="0 0 8 8" stroke="#333">
          <path d="M4 0v8M0 4h8" />
        </svg>
      </button>
      <span className="mr-[18px] ml-[9px] w-[34px] text-right">100%</span>
    </footer>
  );
}

function FindDialog() {
  return (
    <div
      role="dialog"
      aria-label="検索と置換"
      className="absolute top-[479px] left-[354px] z-20 flex h-[217px] w-[549px] flex-col border border-[#6b6b6b] bg-[#f0f0f0] text-[12px] text-black shadow-[3px_4px_14px_rgba(0,0,0,0.4)]"
    >
      <div className="flex h-[30px] shrink-0 items-center bg-white pl-2">
        <span className="text-[11px]">検索と置換</span>
        <button type="button" aria-label="最小化" className="ml-auto flex w-[45px] justify-center">
          <span className="h-px w-[10px] bg-[#c8c8c8]" />
        </button>
        <button type="button" aria-label="最大化" className="flex w-[46px] justify-center">
          <span className="h-[10px] w-[10px] border border-black" />
        </button>
        <button type="button" aria-label="閉じる" className="flex w-[46px] justify-center">
          <svg width="11" height="11" viewBox="0 0 11 11" stroke="#000">
            <path d="M.5.500l10 10M10.500.500l-10 10" />
          </svg>
        </button>
      </div>
      <div className="flex items-end pt-[7px] pl-[6px]">
        <button type="button" className="z-10 -mb-px h-[26px] w-[63px] border border-b-0 border-[#dcdcdc] bg-white">
          検索(<u>D</u>)
        </button>
        <button type="button" className="h-[23px] w-[55px] border border-b-0 border-l-0 border-[#dcdcdc]">
          置換(<u>P</u>)
        </button>
      </div>
      <div className="mr-2 ml-[6px] flex h-[108px] flex-col border border-[#dcdcdc] bg-white pt-[10px] pr-[6px] pb-[10px] pl-2">
        <div className="flex items-center">
          <label htmlFor="find-what" className="w-[113px] whitespace-nowrap">
            検索する文字列(<u>N</u>):
          </label>
          <div className="flex h-[23px] flex-1 border border-[#a8a8ad]">
            <input id="find-what" defaultValue="山口" className="min-w-0 flex-1 px-[3px] text-[12px]" />
            <button type="button" aria-label="履歴" className="flex w-[17px] items-center justify-center border border-[#a8a8ad] bg-[#e1e1e1] text-[#555]">
              <Chevron size={10} />
            </button>
          </div>
        </div>
        <button type="button" className="mt-auto ml-auto h-[25px] w-[103px] border border-[#adadad] bg-[#e1e1e1]">
          オプション(<u>T</u>) &gt;&gt;
        </button>
      </div>
      <div className="mt-[10px] flex justify-end pr-[7px]">
        <button type="button" className="mr-[10px] h-[25px] w-[85px] border border-[#adadad] bg-[#e1e1e1]">
          すべて検索(<u>I</u>)
        </button>
        <button type="button" className="mr-[19px] h-[25px] w-[79px] border-2 border-[#0078d7] bg-[#e1e1e1]">
          次を検索(<u>F</u>)
        </button>
        <button type="button" className="h-[25px] w-[74px] border border-[#adadad] bg-[#e1e1e1]">
          閉じる
        </button>
      </div>
    </div>
  );
}

export default function App() {
  return (
    <div className="relative flex h-screen flex-col overflow-hidden border border-[#7f7f7f] bg-[#f0f0f0] font-['Noto_Sans','Noto_Sans_CJK_JP',sans-serif] text-[#262626] [font-feature-settings:'palt']">
      <TitleBar />
      <RibbonTabs />
      <Ribbon />
      <FormulaBar />
      <Sheet />
      <SheetTabs />
      <StatusBar />
      <FindDialog />
    </div>
  );
}
